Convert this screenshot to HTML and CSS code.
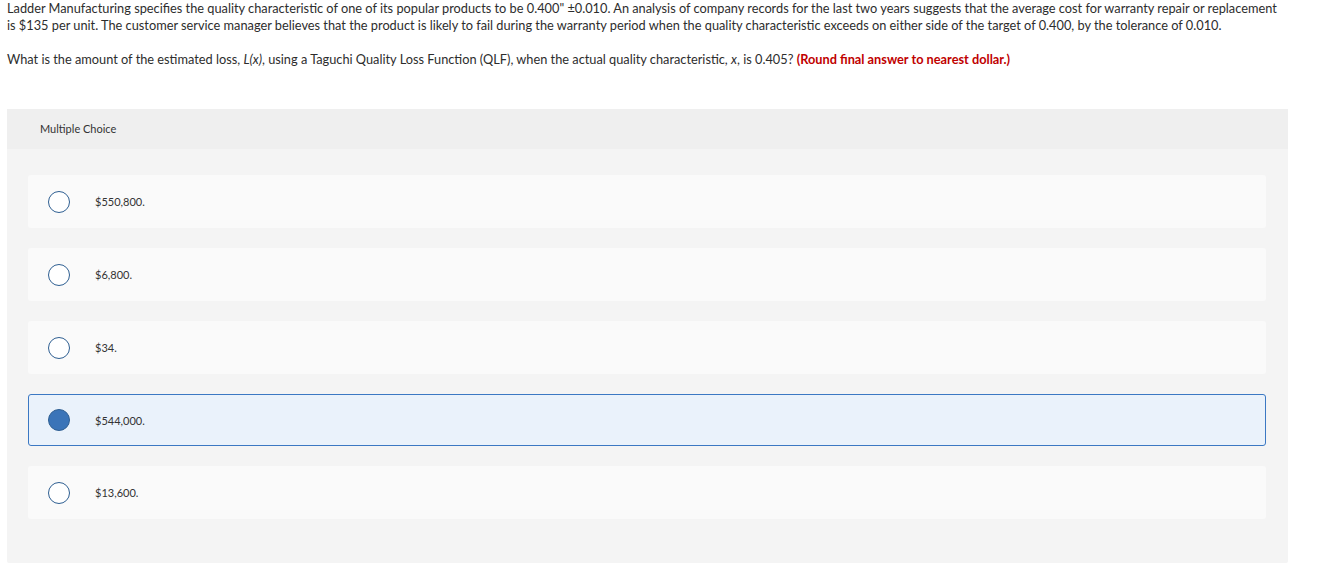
FILE: index.html
```html
<!DOCTYPE html>
<html lang="en">
<head>
<meta charset="utf-8">
<title>Multiple Choice</title>
<link rel="stylesheet" href="styles.css">
</head>
<body>
<div class="page">
  <div class="question">
    <p class="para">Ladder Manufacturing specifies the quality characteristic of one of its popular products to be 0.400" ±0.010. An analysis of company records for the last two years suggests that the average cost for warranty repair or replacement is $135 per unit. The customer service manager believes that the product is likely to fail during the warranty period when the quality characteristic exceeds on either side of the target of 0.400, by the tolerance of 0.010.</p>
    <p class="para">What is the amount of the estimated loss, <em>L(x)</em>, using a Taguchi Quality Loss Function (QLF), when the actual quality characteristic, <em>x</em>, is 0.405? <strong class="hint">(Round final answer to nearest dollar.)</strong></p>
  </div>
  <section class="mc">
    <div class="mc-head">Multiple Choice</div>
    <div class="mc-body">
      <div class="option"><span class="radio"></span><span class="label">$550,800.</span></div>
      <div class="option"><span class="radio"></span><span class="label">$6,800.</span></div>
      <div class="option"><span class="radio"></span><span class="label">$34.</span></div>
      <div class="option selected"><span class="radio"></span><span class="label">$544,000.</span></div>
      <div class="option"><span class="radio"></span><span class="label">$13,600.</span></div>
    </div>
  </section>
</div>
</body>
</html>
```
FILE: styles.css
```css
html, body {
  margin: 0;
  padding: 0;
  background: #fff;
}
body {
  font-family: Lato, "Liberation Sans", sans-serif;
  color: #2d2d2d;
}
.page {
  width: 1281px;
  padding: 0 0 0 7px;
}
.question {
  font-size: 12.78px;
  line-height: 17px;
  width: 1276px;
}
.para {
  margin: 0 0 17px 0;
}
.para em {
  font-style: italic;
}
.hint {
  color: #c00000;
  font-weight: 700;
}
.mc {
  margin-top: 41px;
  background: #f4f4f4;
  border-radius: 2px;
  width: 1281px;
  padding-bottom: 44px;
}
.mc-head {
  height: 40px;
  background: #efefef;
  display: flex;
  align-items: center;
  padding-left: 33px;
  padding-bottom: 2px;
  box-sizing: border-box;
  font-size: 11px;
  color: #333;
}
.mc-body {
  padding: 26px 22px 0 21px;
  display: flex;
  flex-direction: column;
  gap: 20px;
}
.option {
  height: 53px;
  box-sizing: border-box;
  background: #fafafa;
  border-radius: 3px;
  border: 1px solid transparent;
  display: flex;
  align-items: center;
  padding-left: 19px;
  font-size: 11px;
  color: #333;
}
.option.selected {
  background: #eaf2fb;
  border-color: #3b78c3;
  height: 52px;
}
.radio {
  width: 20px;
  height: 20px;
  border-radius: 50%;
  border: 1px solid #2f5f92;
  background: #fff;
  box-sizing: content-box;
  flex: none;
}
.option.selected .radio {
  background: #3a74b8;
  border-color: #2f5f92;
}
.label {
  margin-left: 25px;
}
```
